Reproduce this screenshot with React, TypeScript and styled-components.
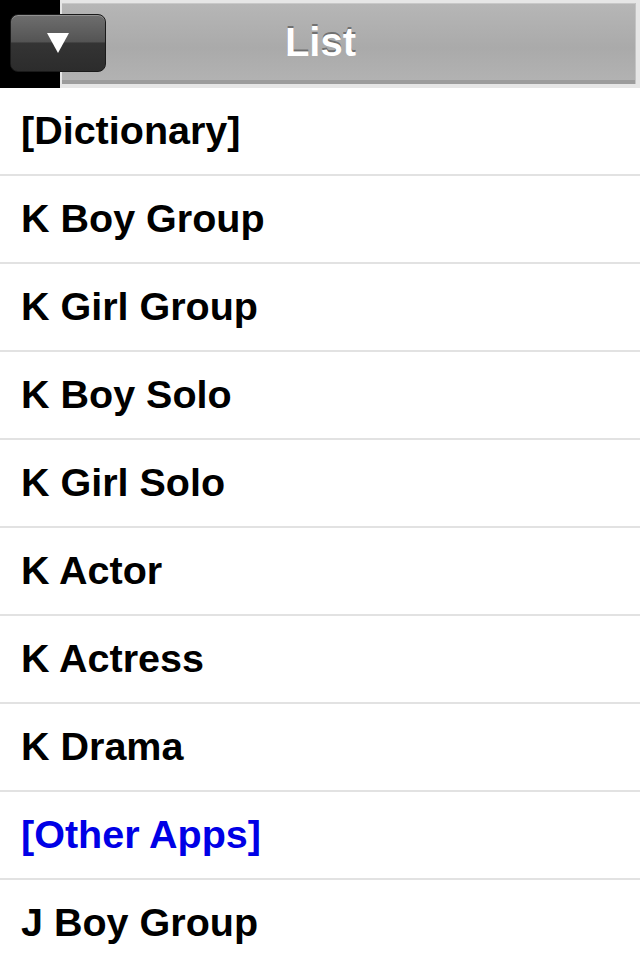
import React from "react";
import styled, { createGlobalStyle } from "styled-components";

const Global = createGlobalStyle`
  html, body { margin: 0; padding: 0; background: #ffffff; }
  body { font-family: "Liberation Sans", Arial, Helvetica, sans-serif; }
  * { box-sizing: border-box; }
`;

const Page = styled.div`
  width: 640px;
  height: 960px;
  overflow: hidden;
  background: #ffffff;
  display: flex;
  flex-direction: column;
`;

const Header = styled.header`
  height: 88px;
  display: flex;
  background: #e6e6e6;
  position: relative;
  flex-shrink: 0;
`;

const BlackStrip = styled.div`
  width: 60px;
  background: #000000;
  flex-shrink: 0;
`;

const Bar = styled.div`
  flex: 1;
  margin: 3px 5px 4px 2px;
  display: flex;
  flex-direction: column;
  background: linear-gradient(#b6b6b6, #aaaaaa 55%, #b3b3b3);
  border-top: 1px solid #c8c8c8;
  box-shadow: 1px 0 0 #c4c4c4;
`;

const BarBody = styled.div`
  flex: 1;
  display: flex;
  align-items: center;
  justify-content: center;
`;

const BarBottom = styled.div`
  height: 4px;
  background: #9c9c9c;
`;

const Title = styled.h1`
  margin: 0;
  font-size: 40px;
  font-weight: 700;
  color: #ffffff;
  text-shadow: 0 -2px 0 rgba(60, 60, 60, 0.55);
  transform: translateX(-28px);
`;

const MenuButton = styled.button`
  position: absolute;
  left: 10px;
  top: 14px;
  width: 96px;
  height: 58px;
  border-radius: 8px;
  border: 1px solid #1a1a1a;
  background: linear-gradient(#6e6e6e 0%, #545454 48%, #343434 50%, #2c2c2c 100%);
  box-shadow: inset 0 1px 0 rgba(255, 255, 255, 0.25);
  display: flex;
  align-items: center;
  justify-content: center;
  padding: 0;
  cursor: pointer;
`;

const List = styled.ul`
  list-style: none;
  margin: 0;
  padding: 0;
`;

const Row = styled.li<{ $link?: boolean }>`
  height: 88px;
  border-bottom: 2px solid #e2e2e2;
  display: flex;
  align-items: center;
  padding-left: 21px;
  font-size: 39.5px;
  font-weight: 700;
  color: ${(p) => (p.$link ? "#0000e6" : "#000000")};
  padding-bottom: 1px;
`;

const items: { label: string; link?: boolean }[] = [
  { label: "[Dictionary]" },
  { label: "K Boy Group" },
  { label: "K Girl Group" },
  { label: "K Boy Solo" },
  { label: "K Girl Solo" },
  { label: "K Actor" },
  { label: "K Actress" },
  { label: "K Drama" },
  { label: "[Other Apps]", link: true },
  { label: "J Boy Group" },
];

export default function App() {
  return (
    <Page>
      <Global />
      <Header>
        <BlackStrip />
        <Bar>
          <BarBody>
            <Title>List</Title>
          </BarBody>
          <BarBottom />
        </Bar>
        <MenuButton aria-label="Menu">
          <svg width="24" height="22" viewBox="0 0 24 22">
            <polygon points="1,1 23,1 12,21" fill="#ffffff" />
          </svg>
        </MenuButton>
      </Header>
      <List>
        {items.map((it) => (
          <Row key={it.label} $link={it.link}>
            {it.label}
          </Row>
        ))}
      </List>
    </Page>
  );
}
